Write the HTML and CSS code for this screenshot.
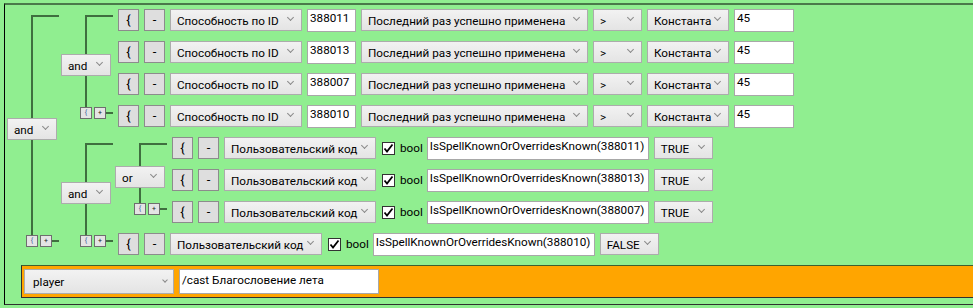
FILE: index.html
```html
<!DOCTYPE html>
<html>
<head>
<meta charset="utf-8">
<link rel="stylesheet" href="styles.css">
</head>
<body>
<div class="frame">
  <div class="group">
    <div class="gl">
      <div class="corner"></div>
      <div class="sel op"><span class="t">and</span><span class="chev"></span></div>
      <div class="vline"></div>
      <div class="gb"><span class="mini">{</span><span class="mini">+</span><span class="hl"></span></div>
    </div>
    <div class="gc">
      <div class="group">
        <div class="gl">
          <div class="corner"></div>
          <div class="sel op"><span class="t">and</span><span class="chev"></span></div>
          <div class="vline"></div>
          <div class="gb"><span class="mini">{</span><span class="mini">+</span><span class="hl"></span></div>
        </div>
        <div class="gc">
          <div class="row">
            <span class="btn">{</span><span class="btn">-</span>
            <div class="sel w-ab"><span class="t">Способность по ID</span><span class="chev"></span></div>
            <span class="inp w-id">388011</span>
            <div class="sel w-last"><span class="t">Последний раз успешно применена</span><span class="chev"></span></div>
            <div class="sel w-cmp"><span class="t">&gt;</span><span class="chev"></span></div>
            <div class="sel w-const"><span class="t">Константа</span><span class="chev"></span></div>
            <span class="inp w-val">45</span>
          </div>
          <div class="row">
            <span class="btn">{</span><span class="btn">-</span>
            <div class="sel w-ab"><span class="t">Способность по ID</span><span class="chev"></span></div>
            <span class="inp w-id">388013</span>
            <div class="sel w-last"><span class="t">Последний раз успешно применена</span><span class="chev"></span></div>
            <div class="sel w-cmp"><span class="t">&gt;</span><span class="chev"></span></div>
            <div class="sel w-const"><span class="t">Константа</span><span class="chev"></span></div>
            <span class="inp w-val">45</span>
          </div>
          <div class="row">
            <span class="btn">{</span><span class="btn">-</span>
            <div class="sel w-ab"><span class="t">Способность по ID</span><span class="chev"></span></div>
            <span class="inp w-id">388007</span>
            <div class="sel w-last"><span class="t">Последний раз успешно применена</span><span class="chev"></span></div>
            <div class="sel w-cmp"><span class="t">&gt;</span><span class="chev"></span></div>
            <div class="sel w-const"><span class="t">Константа</span><span class="chev"></span></div>
            <span class="inp w-val">45</span>
          </div>
          <div class="row">
            <span class="btn">{</span><span class="btn">-</span>
            <div class="sel w-ab"><span class="t">Способность по ID</span><span class="chev"></span></div>
            <span class="inp w-id">388010</span>
            <div class="sel w-last"><span class="t">Последний раз успешно применена</span><span class="chev"></span></div>
            <div class="sel w-cmp"><span class="t">&gt;</span><span class="chev"></span></div>
            <div class="sel w-const"><span class="t">Константа</span><span class="chev"></span></div>
            <span class="inp w-val">45</span>
          </div>
        </div>
      </div>
      <div class="group">
        <div class="gl">
          <div class="corner"></div>
          <div class="sel op"><span class="t">and</span><span class="chev"></span></div>
          <div class="vline"></div>
          <div class="gb"><span class="mini">{</span><span class="mini">+</span><span class="hl"></span></div>
        </div>
        <div class="gc">
          <div class="group">
            <div class="gl">
              <div class="corner"></div>
              <div class="sel op"><span class="t">or</span><span class="chev"></span></div>
              <div class="vline"></div>
              <div class="gb"><span class="mini">{</span><span class="mini">+</span><span class="hl"></span></div>
            </div>
            <div class="gc">
              <div class="row">
                <span class="btn">{</span><span class="btn">-</span>
                <div class="sel w-code"><span class="t">Пользовательский код</span><span class="chev"></span></div>
                <span class="cb"><svg width="11" height="11" viewBox="0 0 11 11"><path d="M1.5 5.5 L4 8.5 L9.5 1.5" stroke="#000" stroke-width="1.8" fill="none"/></svg></span>
                <span class="lbl">bool</span>
                <span class="inp w-expr">IsSpellKnownOrOverridesKnown(388011)</span>
                <div class="sel w-bool"><span class="t">TRUE</span><span class="chev"></span></div>
              </div>
              <div class="row">
                <span class="btn">{</span><span class="btn">-</span>
                <div class="sel w-code"><span class="t">Пользовательский код</span><span class="chev"></span></div>
                <span class="cb"><svg width="11" height="11" viewBox="0 0 11 11"><path d="M1.5 5.5 L4 8.5 L9.5 1.5" stroke="#000" stroke-width="1.8" fill="none"/></svg></span>
                <span class="lbl">bool</span>
                <span class="inp w-expr">IsSpellKnownOrOverridesKnown(388013)</span>
                <div class="sel w-bool"><span class="t">TRUE</span><span class="chev"></span></div>
              </div>
              <div class="row">
                <span class="btn">{</span><span class="btn">-</span>
                <div class="sel w-code"><span class="t">Пользовательский код</span><span class="chev"></span></div>
                <span class="cb"><svg width="11" height="11" viewBox="0 0 11 11"><path d="M1.5 5.5 L4 8.5 L9.5 1.5" stroke="#000" stroke-width="1.8" fill="none"/></svg></span>
                <span class="lbl">bool</span>
                <span class="inp w-expr">IsSpellKnownOrOverridesKnown(388007)</span>
                <div class="sel w-bool"><span class="t">TRUE</span><span class="chev"></span></div>
              </div>
            </div>
          </div>
          <div class="row">
            <span class="btn">{</span><span class="btn">-</span>
            <div class="sel w-code"><span class="t">Пользовательский код</span><span class="chev"></span></div>
            <span class="cb"><svg width="11" height="11" viewBox="0 0 11 11"><path d="M1.5 5.5 L4 8.5 L9.5 1.5" stroke="#000" stroke-width="1.8" fill="none"/></svg></span>
            <span class="lbl">bool</span>
            <span class="inp w-expr">IsSpellKnownOrOverridesKnown(388010)</span>
            <div class="sel w-bool"><span class="t">FALSE</span><span class="chev"></span></div>
          </div>
        </div>
      </div>
    </div>
  </div>
  <div class="action">
    <div class="sel w-unit"><span class="t">player</span><span class="chev"></span></div>
    <span class="inp w-cmd">/cast Благословение лета</span>
  </div>
</div>
</body>
</html>
```

FILE: styles.css
```css
html, body {
  margin: 0;
  padding: 0;
  background: #90ee90;
  overflow: hidden;
}
body {
  width: 973px;
  height: 308px;
  font-family: Roboto, "Noto Sans", sans-serif;
  font-size: 11.7px;
  color: #000;
}
.frame {
  margin: 3px 0 0 4px;
  width: 1200px;
  border-top: 2px solid #4a7a4a;
  border-left: 1px solid #000;
  border-bottom: 1px solid #303030;
  padding-bottom: 6px;
}
.group {
  display: flex;
  align-items: stretch;
}
.gc {
  display: flex;
  flex-direction: column;
}
.gl {
  width: 54px;
  flex: none;
  display: flex;
  flex-direction: column;
  padding-bottom: 14px;
  box-sizing: border-box;
}
.corner {
  margin-top: 10px;
  margin-left: 26px;
  flex: 1 1 6px;
  border-top: 2px solid #3f6f3f;
  border-left: 2px solid #3f6f3f;
}
.vline {
  flex: 1 1 0;
  margin-left: 26px;
  width: 2px;
  background: #3f6f3f;
}
.gb {
  display: flex;
  align-items: center;
  height: 12px;
  padding-left: 21px;
}
.mini {
  width: 12px;
  height: 12px;
  box-sizing: border-box;
  border: 1px solid #6e6e6e;
  background: #e4e4e4;
  font-size: 7px;
  line-height: 10px;
  text-align: center;
  color: #3a5a9a;
}
.mini + .mini {
  margin-left: 2px;
  color: #222;
}
.hl {
  flex: 1;
  height: 2px;
  background: #3f6f3f;
}
.row {
  height: 32px;
  box-sizing: border-box;
  padding: 4px 0 0 5px;
  display: flex;
  align-items: flex-start;
  white-space: nowrap;
}
.btn {
  width: 21px;
  height: 22px;
  box-sizing: border-box;
  border: 1px solid #8c8c8c;
  background: #dedede;
  text-align: center;
  line-height: 19px;
  font-size: 13px;
  margin-right: 5px;
  flex: none;
}
.sel {
  height: 22px;
  box-sizing: border-box;
  border: 1px solid #acacac;
  background: linear-gradient(#f2f2f2, #e4e4e4);
  display: flex;
  align-items: flex-start;
  padding-left: 6px;
  margin-right: 5px;
  flex: none;
}
.sel .t {
  flex: 1;
  line-height: 21px;
  padding-top: 1px;
}
.chev {
  width: 4px;
  height: 4px;
  border-right: 1px solid #8a8a8a;
  border-bottom: 1px solid #8a8a8a;
  transform: rotate(45deg);
  margin: 5px 8px 0 4px;
  flex: none;
}
.op {
  margin-left: 2px;
  margin-right: 0;
  width: 50px;
}
.inp {
  height: 23px;
  box-sizing: border-box;
  border: 1px solid #a8a8a8;
  background: #fff;
  padding: 0 0 0 2px;
  line-height: 17px;
  margin-right: 5px;
  flex: none;
  overflow: hidden;
}
.w-ab { width: 132px; }
.w-id { width: 49px; margin-right: 5px; }
.w-last { width: 227px; }
.w-cmp { width: 49px; }
.w-const { width: 82px; }
.w-val { width: 60px; }
.w-code { width: 152px; }
.w-expr { width: 222px; }
.w-bool { width: 59px; }
.cb {
  width: 13px;
  height: 13px;
  box-sizing: border-box;
  border: 1px solid #333;
  background: #fff;
  margin: 5px 5px 0 1px;
  flex: none;
  display: flex;
  align-items: center;
  justify-content: center;
}
.cb svg {
  display: block;
}
.lbl {
  line-height: 22px;
  margin-right: 4px;
}
.action {
  margin: 4px 0 0 16px;
  height: 33px;
  box-sizing: border-box;
  background: #ffa500;
  border-top: 1px solid #3f5f2f;
  border-bottom: 1px solid #303030;
  border-left: 1px solid #303030;
  padding: 3px 0 0 2px;
  display: flex;
  align-items: flex-start;
}
.w-unit {
  width: 150px;
  height: 25px;
  padding-left: 8px;
}
.w-unit .t {
  line-height: 23px;
}
.w-unit .chev {
  width: 3px;
  height: 3px;
  margin: 8px 6px 0 4px;
}
.w-cmd {
  width: 200px;
  height: 25px;
  line-height: 20px;
}
```
